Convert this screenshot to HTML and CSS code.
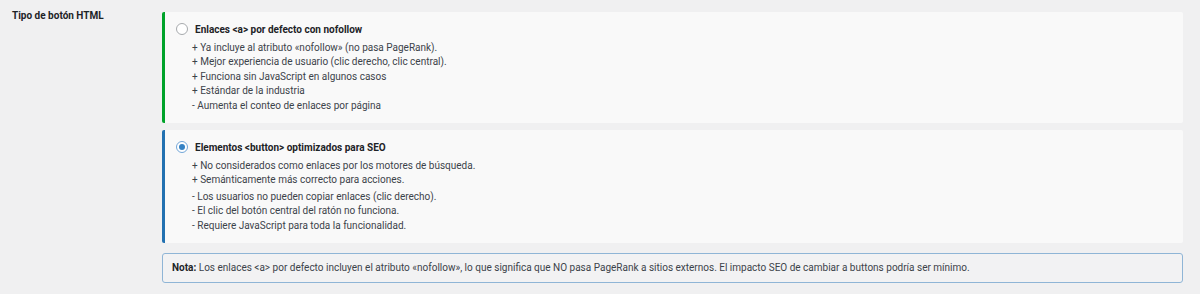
FILE: index.html
```html
<!DOCTYPE html>
<html lang="es">
<head>
<meta charset="utf-8">
<title>Tipo de botón HTML</title>
<link rel="stylesheet" href="styles.css">
</head>
<body>
<div class="row">
  <div class="label">Tipo de botón HTML</div>
  <div class="field">
    <label class="option option-green">
      <div class="head"><span class="radio"></span><span class="title">Enlaces &lt;a&gt; por defecto con nofollow</span></div>
      <ul class="list">
        <li>+ Ya incluye al atributo «nofollow» (no pasa PageRank).</li>
        <li>+ Mejor experiencia de usuario (clic derecho, clic central).</li>
        <li>+ Funciona sin JavaScript en algunos casos</li>
        <li>+ Estándar de la industria</li>
        <li>- Aumenta el conteo de enlaces por página</li>
      </ul>
    </label>
    <label class="option option-blue">
      <div class="head"><span class="radio radio-checked"></span><span class="title">Elementos &lt;button&gt; optimizados para SEO</span></div>
      <ul class="list">
        <li>+ No considerados como enlaces por los motores de búsqueda.</li>
        <li>+ Semánticamente más correcto para acciones.</li>
      </ul>
      <ul class="list list-cons">
        <li>- Los usuarios no pueden copiar enlaces (clic derecho).</li>
        <li>- El clic del botón central del ratón no funciona.</li>
        <li>- Requiere JavaScript para toda la funcionalidad.</li>
      </ul>
    </label>
    <div class="note"><strong>Nota:</strong> Los enlaces &lt;a&gt; por defecto incluyen el atributo «nofollow», lo que significa que NO pasa PageRank a sitios externos. El impacto SEO de cambiar a buttons podría ser mínimo.</div>
  </div>
</div>
</body>
</html>
```

FILE: styles.css
```css
html, body {
  margin: 0;
  padding: 0;
  background: #f0f0f1;
  font-family: Roboto, "Liberation Sans", Arial, sans-serif;
  font-size: 10px;
  color: #3c434a;
}

.row {
  display: grid;
  grid-template-columns: 162px 1fr;
  padding: 9px 17px 0 0;
}

.label {
  padding-left: 12px;
  font-weight: bold;
  line-height: 14px;
  color: #1d2327;
}

.field {
  display: flex;
  flex-direction: column;
  padding-top: 3px;
}

.option {
  display: block;
  background: #f9f9f9;
  border-left: 3px solid #00a32a;
  border-radius: 2px;
  padding: 10px 12px 10px 11px;
  margin-bottom: 7px;
}

.option-blue {
  border-left-color: #2271b1;
  padding-bottom: 10px;
}

.head {
  display: flex;
  align-items: center;
  gap: 7px;
  height: 14px;
}

.radio {
  width: 10px;
  height: 10px;
  border: 1px solid #a7aaad;
  border-radius: 50%;
  background: #fff;
  flex: none;
  display: flex;
  align-items: center;
  justify-content: center;
}

.radio-checked {
  border-color: #72a6d8;
}

.radio-checked::after {
  content: "";
  width: 6px;
  height: 6px;
  border-radius: 50%;
  background: #3582c4;
}

.title {
  font-weight: bold;
  color: #1d2327;
}

.list {
  list-style: none;
  margin: 5px 0 0 16px;
  padding: 0;
  line-height: 14.4px;
}

.list-cons {
  margin-top: 2px;
}

.note {
  margin-top: 3px;
  border: 1px solid #8fb5d6;
  border-radius: 3px;
  background: #f2f2f3;
  padding: 7px 9px;
  line-height: 14px;
  color: #3c434a;
}

.note strong {
  color: #1d2327;
}
```
